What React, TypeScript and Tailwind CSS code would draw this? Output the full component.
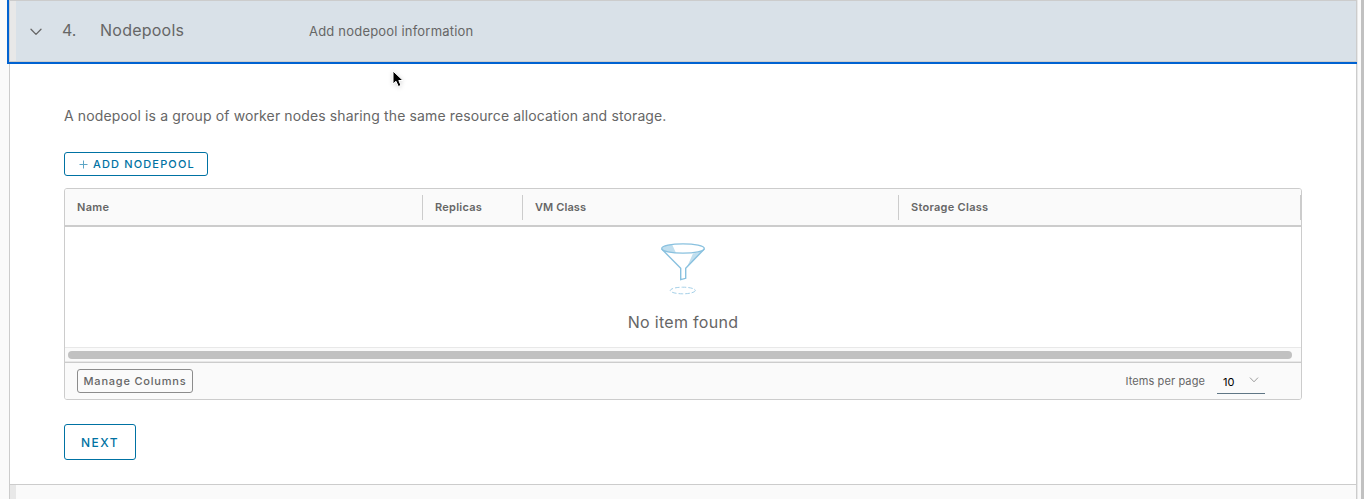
import React from "react";

const columns = [
  { label: "Name", width: "w-[358px]", tracking: "tracking-[0.35px]" },
  { label: "Replicas", width: "w-[100px]", tracking: "tracking-[0.25px]" },
  { label: "VM Class", width: "w-[376px]", tracking: "tracking-[0.1px]" },
  { label: "Storage Class", width: "w-[402px]", tracking: "tracking-[0.28px]" },
];

function Chevron({ className }: { className: string }) {
  return (
    <svg viewBox="0 0 12 8" className={className} fill="none" stroke="currentColor" strokeLinecap="round" strokeLinejoin="round">
      <path d="M1 1.2 6 6.4 11 1.2" strokeWidth="1.3" />
    </svg>
  );
}

function Funnel() {
  return (
    <svg width="46" height="54" viewBox="0 0 46 54" fill="none" className="shrink-0">
      <path d="M2 6.500C3 4.500 7 3 12 2.300L16 11C8 10.500 3 9 2 6.500Z" fill="#c1dfef" />
      <path d="M43.500 8 27 25 33 11.500C38 10.500 41.500 9.500 43.500 8Z" fill="#c1dfef" />
      <ellipse cx="23" cy="6.500" rx="21.300" ry="4.700" stroke="#89c1df" strokeWidth="1.300" />
      <path d="M1.700 7 20.700 26.300V37.700L25.700 36.300V26.300L44.300 7" stroke="#89c1df" strokeWidth="1.400" />
      <ellipse cx="22.800" cy="48.500" rx="12.500" ry="3.300" stroke="#a5d0e8" strokeDasharray="4.500 2" />
    </svg>
  );
}

export default function App() {
  return (
    <div className="relative flex h-[499px] w-[1364px] overflow-hidden bg-[#fafafa] font-[Inter,sans-serif] text-[#666]">
      <div className="flex w-[9px] shrink-0 justify-end">
        <div className="h-[64px] w-[2px] bg-[#0062d1]" />
      </div>
      <main className="flex w-[1348px] shrink-0 flex-col">
        <header className="flex h-[64px] shrink-0 flex-col border-b-2 border-[#0062d1]">
          <div className="flex h-[62px] items-center border border-[#ccc] bg-[#d9e1e8]">
            <div className="h-full w-[6px] bg-[#e8e8e8]" />
            <Chevron className="ml-[14px] mt-px h-[8px] w-[12px]" />
            <span className="ml-[20px] w-[38px] pb-[2px] text-[16px]">4.</span>
            <span className="w-[209px] pb-[2px] text-[16px] tracking-[0.24px]">Nodepools</span>
            <span className="pt-px text-[13px] tracking-[0.2px]">Add nodepool information</span>
          </div>
        </header>
        <section className="flex h-[420px] shrink-0 flex-col items-start border-x border-[#ccc] bg-white px-[54px] pt-[40px]">
          <p className="h-[24px] whitespace-nowrap text-[14px] leading-[24px] tracking-[0.125px]">
            A nodepool is a group of worker nodes sharing the same resource allocation and storage.
          </p>
          <button className="mt-[24px] flex h-[24px] w-[144px] shrink-0 items-center rounded-[3px] border border-[#0072a3] pl-[14px] text-[11px] font-medium text-[#0072a3]">
            <svg width="9" height="9" viewBox="0 0 9 9" className="mr-[5px]" stroke="#5ca5c5">
              <path d="M4.500 .5v8M.5 4.500h8" />
            </svg>
            <span className="whitespace-nowrap tracking-[1.15px]">ADD NODEPOOL</span>
          </button>
          <div className="mt-[12px] flex h-[212px] w-[1238px] shrink-0 flex-col overflow-hidden rounded-[3px] border border-[#ccc]">
            <div className="flex h-[38px] shrink-0 items-center border-b-2 border-[#ccc] bg-[#fafafa]">
              {columns.map((column) => (
                <div key={column.label} className={`${column.width} flex h-[25px] shrink-0 items-center border-r border-[#ccc] pl-[12px]`}>
                  <span className={`text-[11px] font-semibold ${column.tracking}`}>{column.label}</span>
                </div>
              ))}
            </div>
            <div className="flex h-[120px] shrink-0 flex-col items-center pt-[15px]">
              <Funnel />
              <span className="mt-[14px] text-[16px] leading-[24px] tracking-[0.3px]">No item found</span>
            </div>
            <div className="flex h-[15px] shrink-0 items-center border-y border-[#e8e8e8] bg-[#fafafa] pl-[3px]">
              <div className="h-[8px] w-[1224px] rounded-full bg-[#c1c1c1]" />
            </div>
            <footer className="flex h-[37px] shrink-0 items-center border-t border-[#ccc] bg-[#fafafa] pl-[12px] pr-[36px]">
              <button className="h-[24px] w-[116px] whitespace-nowrap rounded-[3px] border border-[#8c8c8c] text-[11px] font-medium tracking-[0.8px]">Manage Columns</button>
              <span className="ml-auto mr-[12px] text-[11px] tracking-[0.1px]">Items per page</span>
              <div className="mt-px flex h-[25px] w-[48px] items-center border-b border-[#5f7685] pl-[6px] text-[11px] text-black">
                <span className="pt-[2px]">10</span>
                <Chevron className="mb-[2px] ml-auto mr-[6px] h-[6px] w-[10px] text-[#999]" />
              </div>
            </footer>
          </div>
          <button className="mt-[24px] h-[36px] w-[72px] shrink-0 rounded-[3px] border border-[#0072a3] pt-[2px] text-[12px] font-medium tracking-[1.5px] text-[#0072a3]">NEXT</button>
        </section>
        <div className="flex h-[15px] shrink-0 border-x border-t border-[#ccc] bg-[#fafafa]">
          <div className="w-[6px] bg-[#e8e8e8]" />
        </div>
      </main>
      <div className="w-[4px] border-l border-[#e8e8e8]" />
      <div className="w-[3px] bg-[#c1c1c1]" />
      <svg className="absolute left-[391px] top-[69px] drop-shadow-sm" width="14" height="20" viewBox="0 0 14 20">
        <path d="M2 2V15L5 12.300 7.300 17.500 10 16.400 7.800 11.500H12Z" fill="black" stroke="white" strokeWidth="1" />
      </svg>
    </div>
  );
}
